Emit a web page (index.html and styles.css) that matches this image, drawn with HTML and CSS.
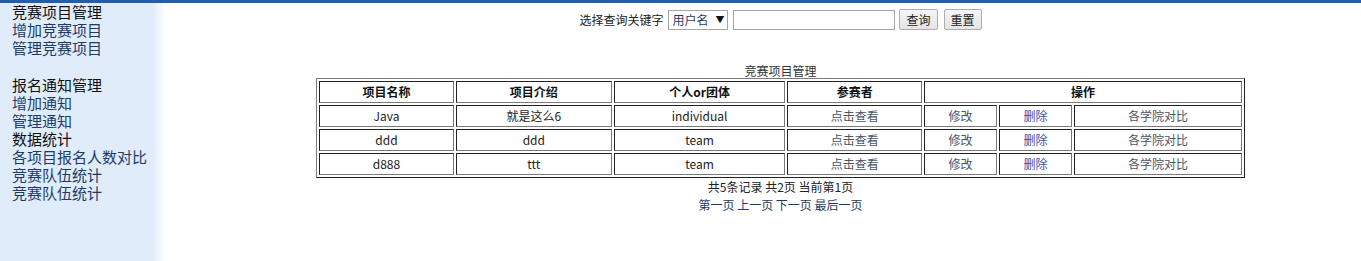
FILE: index.html
```html
<!DOCTYPE html>
<html>
<head>
    <meta charset="utf-8">
    <title>竞赛项目管理</title>
    <link rel="stylesheet" href="styles.css">
</head>
<body>
<div class="topbar"></div>
<div class="frame">
    <div class="side">
        <div class="menu">
            <div class="head">竞赛项目管理</div>
            <a href="#">增加竞赛项目</a>
            <a href="#">管理竞赛项目</a>
        </div>
        <div class="menu">
            <div class="head">报名通知管理</div>
            <a href="#">增加通知</a>
            <a href="#">管理通知</a>
            <div class="head">数据统计</div>
            <a href="#">各项目报名人数对比</a>
            <a href="#">竞赛队伍统计</a>
            <a href="#">竞赛队伍统计</a>
        </div>
    </div>
    <div class="main">
        <form class="search">
            <span>选择查询关键字</span>
            <span class="sel">
                <select>
                    <option>用户名</option>
                    <option>项目名称</option>
                </select>
            </span>
            <input type="text" class="kw">
            <input type="button" class="btn" value="查询">
            <input type="button" class="btn" value="重置">
        </form>

        <div class="caption">竞赛项目管理</div>
        <table class="list">
            <colgroup>
                <col class="c1"><col class="c2"><col class="c3"><col class="c4">
                <col class="c5"><col class="c6"><col class="c7">
            </colgroup>
            <tr>
                <th>项目名称</th>
                <th>项目介绍</th>
                <th>个人or团体</th>
                <th>参赛者</th>
                <th colspan="3">操作</th>
            </tr>
            <tr>
                <td>Java</td>
                <td>就是这么6</td>
                <td>individual</td>
                <td><a href="#">点击查看</a></td>
                <td><a href="#">修改</a></td>
                <td><a href="#" class="del">删除</a></td>
                <td><a href="#">各学院对比</a></td>
            </tr>
            <tr>
                <td>ddd</td>
                <td>ddd</td>
                <td>team</td>
                <td><a href="#">点击查看</a></td>
                <td><a href="#">修改</a></td>
                <td><a href="#" class="del">删除</a></td>
                <td><a href="#">各学院对比</a></td>
            </tr>
            <tr>
                <td>d888</td>
                <td>ttt</td>
                <td>team</td>
                <td><a href="#">点击查看</a></td>
                <td><a href="#">修改</a></td>
                <td><a href="#" class="del">删除</a></td>
                <td><a href="#">各学院对比</a></td>
            </tr>
        </table>

        <div class="pager">
            <div>共5条记录 共2页 当前第1页</div>
            <div>
                <a href="#">第一页</a>
                <a href="#">上一页</a>
                <a href="#">下一页</a>
                <a href="#">最后一页</a>
            </div>
        </div>
    </div>
</div>
</body>
</html>
```

FILE: styles.css
```css
html, body {
    margin: 0;
    padding: 0;
    height: 100%;
}

body {
    font-family: "Noto Sans CJK SC", "Liberation Sans", sans-serif;
    font-size: 12px;
    color: #222;
    background: #fff;
}

a {
    text-decoration: none;
    color: #1f3a66;
}

.topbar {
    height: 3px;
    background: #1f5db3;
}

.frame {
    display: flex;
    height: calc(100% - 3px);
}

/* left menu */
.side {
    width: 200px;
    flex: none;
    padding-left: 12px;
    box-sizing: border-box;
    background: linear-gradient(to right, #e0ecfa 0, #e0ecfa 152px, #fff 166px);
    font-size: 15px;
    line-height: 18px;
}

.menu {
    display: flex;
    flex-direction: column;
}

.menu + .menu {
    margin-top: 19px;
}

.menu .head {
    color: #111;
}

.menu a {
    color: #1c3b6a;
}

/* content */
.main {
    flex: 1;
    display: flex;
    flex-direction: column;
    align-items: center;
}

.search {
    display: flex;
    align-items: center;
    gap: 4px;
    margin: 6px 0 0;
    height: 21px;
}

.search span {
    margin-right: 1px;
}

.sel {
    position: relative;
    display: inline-block;
}

.sel select {
    appearance: none;
    -webkit-appearance: none;
    width: 60px;
    height: 20px;
    padding: 0 0 0 3px;
    border: 1px solid #a6a6a6;
    border-radius: 0;
    background: #fff;
    font-family: inherit;
    font-size: 12px;
    color: #1f3a66;
}

.sel::after {
    content: "\25BC";
    position: absolute;
    right: 4px;
    top: 4px;
    font-size: 9px;
    line-height: 12px;
    color: #111;
    pointer-events: none;
}

.kw {
    width: 162px;
    height: 20px;
    box-sizing: border-box;
    border: 1px solid #a6a6a6;
    padding: 0 2px;
}

.btn {
    height: 21px;
    padding: 0 6px;
    border: 1px solid #adadad;
    border-radius: 2px;
    background: linear-gradient(#f6f6f6, #e4e4e4);
    font-family: inherit;
    font-size: 12px;
    color: #222;
}

.btn + .btn {
    margin-left: 2px;
}

.caption {
    margin-top: 33px;
    line-height: 15px;
    color: #333;
}

.list {
    width: 80%;
    table-layout: fixed;
    border-collapse: separate;
    border-spacing: 2px;
    border: 1px solid;
    border-color: #7a7a7a #222 #222 #7a7a7a;
}

.list th, .list td {
    border: 1px solid;
    border-color: #222 #7a7a7a #7a7a7a #222;
    padding: 1px 0;
    line-height: 18px;
    text-align: center;
    font-size: 12px;
}

.list th {
    font-weight: bold;
    color: #111;
}

.list td {
    color: #222;
}

.list td a {
    color: #4a5566;
}

.list td a.del {
    color: #3b4fa8;
}

.c1 { width: 14.6%; }
.c2 { width: 16.9%; }
.c3 { width: 18.6%; }
.c4 { width: 14.6%; }
.c5 { width: 7.9%; }
.c6 { width: 7.9%; }
.c7 { width: 18.2%; }

.pager {
    text-align: center;
    line-height: 18px;
    color: #222;
}

.pager a {
    color: #1f3a66;
}
```
